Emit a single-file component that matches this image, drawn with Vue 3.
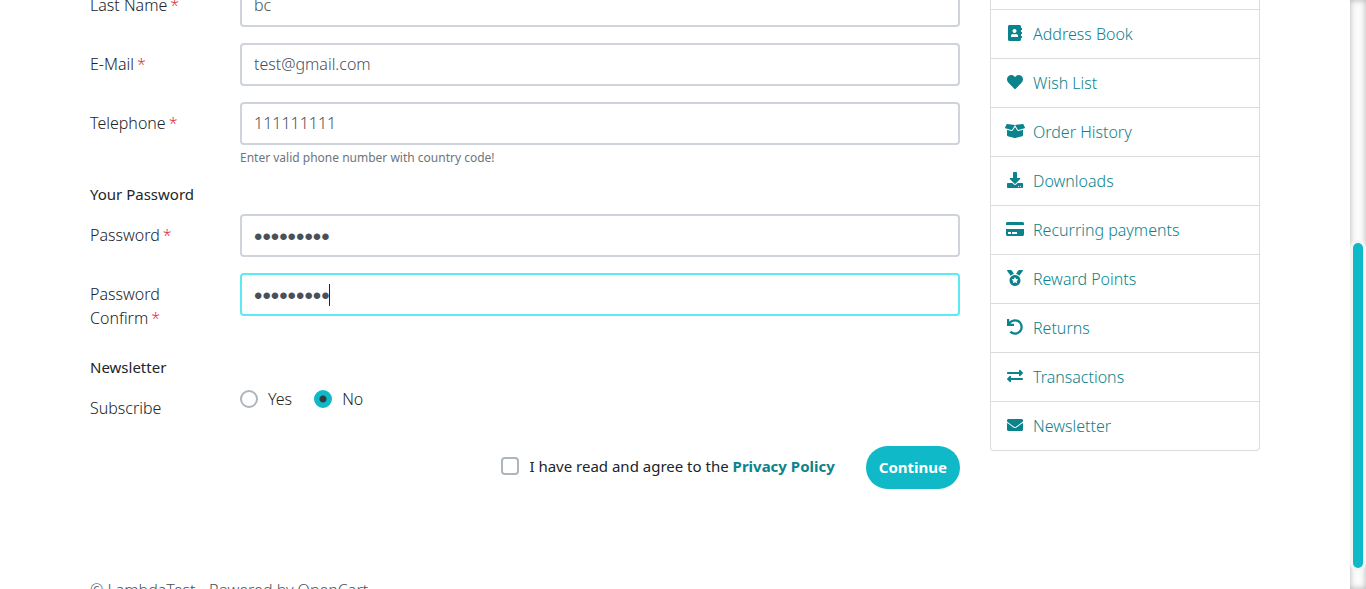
<script setup>
import { ref } from 'vue'

const lastName = ref('bc')
const email = ref('test@gmail.com')
const telephone = ref('111111111')
const password = ref('password1')
const confirmation = ref('password1')
const newsletter = ref('no')
const agree = ref(false)

const links = [
  { label: 'Address Book', box: '0 0 448 512', width: 14, path: 'M436 160c6.6 0 12-5.4 12-12v-40c0-6.6-5.4-12-12-12h-20V48c0-26.5-21.5-48-48-48H48C21.5 0 0 21.5 0 48v416c0 26.5 21.5 48 48 48h320c26.5 0 48-21.5 48-48v-48h20c6.6 0 12-5.4 12-12v-40c0-6.6-5.4-12-12-12h-20v-64h20c6.6 0 12-5.4 12-12v-40c0-6.6-5.4-12-12-12h-20v-64h20zm-228-32c35.3 0 64 28.7 64 64s-28.7 64-64 64-64-28.7-64-64 28.7-64 64-64zm112 236.8c0 10.6-10 19.2-22.4 19.2H118.4C106 384 96 375.4 96 364.8v-19.2c0-31.8 30.1-57.6 67.2-57.6h5c12.3 5.1 25.7 8 39.8 8s27.6-2.9 39.8-8h5c37.1 0 67.2 25.8 67.2 57.6v19.2z' },
  { label: 'Wish List', box: '0 0 512 512', width: 16, path: 'M462.3 62.6C407.5 15.9 326 24.3 275.7 76.2L256 96.5l-19.7-20.3C186.1 24.3 104.5 15.9 49.7 62.6c-62.8 53.6-66.1 149.8-9.9 207.9l193.5 199.8c12.5 12.9 32.8 12.9 45.3 0l193.5-199.8c56.3-58.1 53-154.3-9.8-207.9z' },
  { label: 'Order History', box: '0 0 640 512', width: 20, path: 'M425.7 256c-16.9 0-32.8-9-41.4-23.4L320 126l-64.2 106.6c-8.7 14.5-24.6 23.5-41.5 23.5-4.5 0-9-.6-13.3-1.9L64 215v178c0 14.7 10 27.5 24.2 31l216.2 54.1c10.2 2.5 20.9 2.5 31 0L551.8 424c14.2-3.6 24.2-16.4 24.2-31V215l-137 39.1c-4.3 1.3-8.8 1.9-13.3 1.9zm212.6-112.2L586.8 41c-3.1-6.2-9.8-9.8-16.7-8.9L320 64l91.7 152.1c3.8 6.3 11.4 9.3 18.5 7.3l197.9-56.5c9.9-2.9 14.7-13.9 10.2-23.1zM53.2 41L1.7 143.8c-4.6 9.2.3 20.2 10.1 23l197.9 56.5c7.1 2 14.7-1 18.5-7.3L320 64 69.8 32.1c-6.9-.8-13.5 2.7-16.6 8.9z' },
  { label: 'Downloads', box: '0 0 512 512', width: 16, path: 'M216 0h80c13.3 0 24 10.7 24 24v168h87.7c17.8 0 26.7 21.5 14.1 34.1L269.7 378.3c-7.5 7.5-19.8 7.5-27.3 0L90.1 226.1c-12.6-12.6-3.7-34.1 14.1-34.1H192V24c0-13.3 10.7-24 24-24zm296 376v112c0 13.3-10.7 24-24 24H24c-13.3 0-24-10.7-24-24V376c0-13.3 10.7-24 24-24h146.7l49 49c20.1 20.1 52.5 20.1 72.6 0l49-49H488c13.3 0 24 10.7 24 24zm-124 88c0-11-9-20-20-20s-20 9-20 20 9 20 20 20 20-9 20-20zm64 0c0-11-9-20-20-20s-20 9-20 20 9 20 20 20 20-9 20-20z' },
  { label: 'Recurring payments', box: '0 0 576 512', width: 18, path: 'M0 432c0 26.5 21.5 48 48 48h480c26.5 0 48-21.5 48-48V256H0v176zm192-68c0-6.6 5.4-12 12-12h136c6.6 0 12 5.4 12 12v40c0 6.6-5.4 12-12 12H204c-6.6 0-12-5.4-12-12v-40zm-128 0c0-6.6 5.4-12 12-12h72c6.6 0 12 5.4 12 12v40c0 6.6-5.4 12-12 12H76c-6.6 0-12-5.4-12-12v-40zM576 80v48H0V80c0-26.5 21.5-48 48-48h480c26.5 0 48 21.5 48 48z' },
  { label: 'Reward Points', box: '0 0 512 512', width: 16, path: 'M223.75 130.75L154.62 15.54A31.997 31.997 0 0 0 127.18 0H16.03C3.08 0-4.5 14.57 2.92 25.18l111.27 158.96c29.72-27.77 67.52-46.83 109.56-53.39zM495.97 0H384.82c-11.24 0-21.66 5.9-27.44 15.54l-69.13 115.21c42.04 6.56 79.84 25.62 109.56 53.38L509.08 25.18C516.5 14.57 508.92 0 495.97 0zM256 160c-97.2 0-176 78.8-176 176s78.8 176 176 176 176-78.8 176-176-78.8-176-176-176zm92.52 157.26l-37.93 36.96 8.97 52.22c1.6 9.36-8.26 16.51-16.65 12.09L256 393.88l-46.9 24.65c-8.4 4.45-18.25-2.74-16.65-12.09l8.97-52.22-37.93-36.96c-6.82-6.64-3.05-18.23 6.35-19.59l52.43-7.64 23.43-47.52c2.11-4.28 6.19-6.39 10.28-6.39 4.11 0 8.22 2.14 10.33 6.39l23.43 47.52 52.43 7.64c9.4 1.36 13.17 12.95 6.35 19.59z' },
  { label: 'Returns', box: '0 0 512 512', width: 16, path: 'M212.333 224.333H12c-6.627 0-12-5.373-12-12V12C0 5.373 5.373 0 12 0h48c6.627 0 12 5.373 12 12v78.112C117.773 39.279 184.26 7.47 258.175 8.007c136.906.994 246.448 111.623 246.157 248.532C504.041 393.258 393.12 504 256.333 504c-64.089 0-122.496-24.313-166.51-64.215-5.099-4.622-5.334-12.554-.467-17.42l33.967-33.967c4.474-4.474 11.662-4.717 16.401-.525C170.76 415.336 211.58 432 256.333 432c97.268 0 176-78.716 176-176 0-97.267-78.716-176-176-176-58.496 0-110.28 28.476-142.274 72.333h98.274c6.627 0 12 5.373 12 12v48c0 6.627-5.373 12-12 12z' },
  { label: 'Transactions', box: '0 0 512 512', width: 16, path: 'M0 168v-16c0-13.255 10.745-24 24-24h360V80c0-21.367 25.899-32.042 40.971-16.971l80 80c9.372 9.373 9.372 24.569 0 33.941l-80 80C409.956 271.982 384 261.456 384 240v-48H24c-13.255 0-24-10.745-24-24zm488 152H128v-48c0-21.314-25.862-32.08-40.971-16.971l-80 80c-9.372 9.373-9.372 24.569 0 33.941l80 80C102.057 463.997 128 453.437 128 432v-48h360c13.255 0 24-10.745 24-24v-16c0-13.255-10.745-24-24-24z' },
  { label: 'Newsletter', box: '0 0 512 512', width: 16, path: 'M502.3 190.8c3.9-3.1 9.7-.2 9.7 4.7V400c0 26.5-21.5 48-48 48H48c-26.5 0-48-21.5-48-48V195.6c0-5 5.7-7.8 9.7-4.7 22.4 17.4 52.1 39.5 154.1 113.6 21.1 15.4 56.7 47.8 92.2 47.6 35.7.3 72-32.8 92.3-47.6 102-74.1 131.6-96.3 154-113.7zM256 320c23.2.4 56.6-29.2 73.4-41.4 132.7-96.3 142.8-104.7 173.4-128.7 5.8-4.5 9.2-11.5 9.2-18.9v-19c0-26.5-21.5-48-48-48H48c-26.5 0-48 21.5-48 48v19c0 7.4 3.4 14.3 9.2 18.9 30.6 23.9 40.7 32.4 173.4 128.7 16.8 12.2 50.2 41.8 73.4 41.4z' }
]
</script>

<template>
  <div class="window">
    <div class="page">
      <div class="columns">
        <form class="account" @submit.prevent>
          <div class="row">
            <label for="lastname">Last Name<b>*</b></label>
            <input id="lastname" v-model="lastName" class="text" type="text">
          </div>
          <div class="row">
            <label for="email">E-Mail<b>*</b></label>
            <input id="email" v-model="email" class="text" type="email">
          </div>
          <div class="row">
            <label for="telephone">Telephone<b>*</b></label>
            <div>
              <input id="telephone" v-model="telephone" class="text" type="tel">
              <small>Enter valid phone number with country code!</small>
            </div>
          </div>

          <h2>Your Password</h2>
          <div class="row">
            <label for="password">Password<b>*</b></label>
            <input id="password" v-model="password" class="text secret" type="password">
          </div>
          <div class="row">
            <label for="confirm">Password Confirm<b>*</b></label>
            <div class="focus">
              <input id="confirm" v-model="confirmation" class="text secret active" type="password">
              <span class="caret"></span>
            </div>
          </div>

          <h2 class="news">Newsletter</h2>
          <div class="row" role="radiogroup" aria-labelledby="subscribe">
            <span id="subscribe" class="name">Subscribe</span>
            <div class="options">
              <label class="choice"><input v-model="newsletter" type="radio" name="newsletter" value="yes">Yes</label>
              <label class="choice"><input v-model="newsletter" type="radio" name="newsletter" value="no">No</label>
            </div>
          </div>

          <div class="actions">
            <div class="consent">
              <input id="agree" v-model="agree" type="checkbox">
              <span><label for="agree">I have read and agree to the</label> <a href="#privacy">Privacy Policy</a></span>
            </div>
            <button type="submit">Continue</button>
          </div>
        </form>

        <nav class="menu">
          <a v-for="link in links" :key="link.label" href="#account">
            <svg :viewBox="link.box" :width="link.width" height="16" aria-hidden="true"><path :d="link.path" /></svg>
            <span>{{ link.label }}</span>
          </a>
        </nav>
      </div>
      <footer>© LambdaTest - Powered by OpenCart</footer>
    </div>
    <div class="rail"><div class="thumb"></div></div>
  </div>
</template>

<style>
body {
  margin: 0;
  background: #fff;
}
</style>

<style scoped>
* {
  box-sizing: border-box;
}

.window {
  display: grid;
  grid-template-columns: minmax(0, 1fr) 16px;
  height: 100vh;
  overflow: hidden;
  color: #212529;
  font: 300 16px/24px "Noto Sans", sans-serif;
}

.page {
  min-width: 0;
  padding: 0 90px;
  overflow: hidden;
}

.columns {
  display: grid;
  grid-template-columns: minmax(0, 1fr) 270px;
  gap: 30px;
  align-items: start;
}

.account {
  margin-top: -16px;
}

.row {
  display: grid;
  grid-template-columns: 150px minmax(0, 1fr);
  align-items: start;
  margin-bottom: 16px;
}

.row > label,
.name {
  padding: 9px 48px 0 0;
}

b {
  margin-left: 3px;
  color: #dc3545;
  font-weight: 300;
}

.text {
  display: block;
  width: 100%;
  height: 43px;
  padding: 0 12px 2px;
  border: 2px solid #ced4da;
  border-radius: 4px;
  outline: 0;
  background: #fff;
  color: #495057;
  font: inherit;
}

.secret {
  padding-top: 2px;
  padding-bottom: 0;
  font-family: "Liberation Sans", sans-serif;
  font-size: 24px;
}

.active {
  border-color: #5cebf5;
}

.focus {
  position: relative;
}

.caret {
  position: absolute;
  top: 11px;
  left: 89px;
  width: 1px;
  height: 22px;
  background: #212529;
}

small {
  display: block;
  margin-top: 4px;
  color: #6c757d;
  font-size: 12px;
  font-weight: 400;
  line-height: 18px;
}

h2 {
  margin: 0 0 9px;
  font-size: 15px;
  font-weight: 400;
  line-height: 22px;
}

.news {
  margin-top: 26px;
}

.options {
  display: flex;
  gap: 22px;
}

.choice {
  display: flex;
  align-items: center;
  gap: 10px;
}

input[type="radio"],
input[type="checkbox"] {
  flex: none;
  width: 18px;
  height: 18px;
  margin: 0;
  border: 2px solid #adb5bd;
  border-radius: 4px;
  appearance: none;
  background: #fff;
}

input[type="radio"] {
  border-radius: 50%;
}

input[type="radio"]:checked {
  border-color: #0fb9c7;
  background: radial-gradient(circle, #343a40 3px, #0fb9c7 4px);
}

.actions {
  display: flex;
  justify-content: flex-end;
  align-items: center;
  gap: 31px;
  margin-top: 26px;
}

.consent {
  display: flex;
  align-items: center;
  gap: 10px;
  padding-bottom: 4px;
  font-size: 15px;
  font-weight: 400;
}

.consent a {
  color: #0b838d;
  font-weight: 700;
  text-decoration: none;
}

button {
  height: 43px;
  padding: 0 13px 2px;
  border: 0;
  border-radius: 22px;
  background: #0fb9c7;
  color: #fff;
  font: inherit;
  font-size: 15px;
  font-weight: 700;
}

.menu {
  padding-top: 9px;
  border: 1px solid #dcdcdc;
  border-top: 0;
  border-radius: 0 0 4px 4px;
}

.menu a {
  display: grid;
  grid-template-columns: 20px 1fr;
  gap: 8px;
  align-items: center;
  height: 49px;
  padding: 0 14px;
  border-top: 1px solid #dcdcdc;
  color: #0b838d;
  text-decoration: none;
}

.menu svg {
  justify-self: center;
  margin-bottom: 2px;
  fill: currentColor;
}

footer {
  margin-top: 89px;
  color: #495057;
}

.rail {
  padding: 243px 3px 0;
  overflow: hidden;
  background: #fcfcfc;
  box-shadow: inset 0 0 6px rgba(0, 0, 0, 0.3);
}

.thumb {
  height: 325px;
  border-radius: 5px;
  background: #0fb9c7;
  box-shadow: 0 0 0 3px #f5f5f5;
}
</style>
